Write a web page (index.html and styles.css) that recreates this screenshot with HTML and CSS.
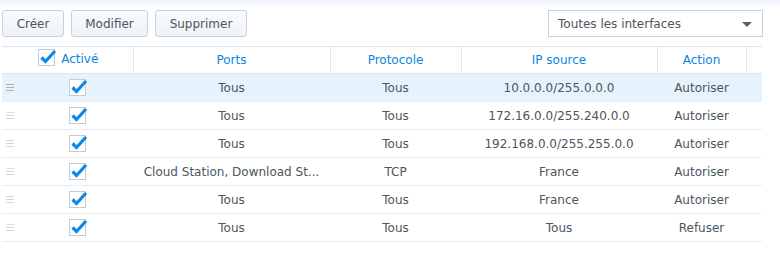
FILE: index.html
```html
<!DOCTYPE html>
<html lang="fr">
<head>
  <meta charset="UTF-8">
  <title>Pare-feu</title>
  <link rel="stylesheet" href="styles.css">
</head>
<body>
  <div class="panel">
    <!-- Toolbar -->
    <div class="toolbar">
      <div class="buttons">
        <button class="btn btn-create">Créer</button>
        <button class="btn btn-edit">Modifier</button>
        <button class="btn btn-delete">Supprimer</button>
      </div>
      <div class="select">
        <span>Toutes les interfaces</span>
        <span class="arrow"></span>
      </div>
    </div>

    <!-- Rules grid -->
    <table class="rules">
      <colgroup>
        <col class="c-drag">
        <col class="c-active">
        <col class="c-ports">
        <col class="c-proto">
        <col class="c-ip">
        <col class="c-action">
        <col class="c-pad">
      </colgroup>
      <thead>
        <tr>
          <th colspan="2">
            <span class="head-check">
              <svg class="check" width="20" height="18" viewBox="0 0 20 18"><rect x="0.5" y="1.5" width="16" height="16" fill="#fff" stroke="#c3ccd6"/><path d="M3.5 9.5 L7.5 13.5 L17 3" fill="none" stroke="#0a8ae8" stroke-width="3.2"/></svg>
              Activé
            </span>
          </th>
          <th>Ports</th>
          <th>Protocole</th>
          <th>IP source</th>
          <th>Action</th>
          <th></th>
        </tr>
      </thead>
      <tbody>
        <tr class="selected">
          <td class="drag"><span class="grip"></span></td>
          <td><svg class="check" width="20" height="18" viewBox="0 0 20 18"><rect x="0.5" y="1.5" width="16" height="16" fill="#fff" stroke="#c3ccd6"/><path d="M3.5 9.5 L7.5 13.5 L17 3" fill="none" stroke="#0a8ae8" stroke-width="3.2"/></svg></td>
          <td>Tous</td>
          <td>Tous</td>
          <td>10.0.0.0/255.0.0.0</td>
          <td>Autoriser</td>
          <td></td>
        </tr>
        <tr>
          <td class="drag"><span class="grip"></span></td>
          <td><svg class="check" width="20" height="18" viewBox="0 0 20 18"><rect x="0.5" y="1.5" width="16" height="16" fill="#fff" stroke="#c3ccd6"/><path d="M3.5 9.5 L7.5 13.5 L17 3" fill="none" stroke="#0a8ae8" stroke-width="3.2"/></svg></td>
          <td>Tous</td>
          <td>Tous</td>
          <td>172.16.0.0/255.240.0.0</td>
          <td>Autoriser</td>
          <td></td>
        </tr>
        <tr>
          <td class="drag"><span class="grip"></span></td>
          <td><svg class="check" width="20" height="18" viewBox="0 0 20 18"><rect x="0.5" y="1.5" width="16" height="16" fill="#fff" stroke="#c3ccd6"/><path d="M3.5 9.5 L7.5 13.5 L17 3" fill="none" stroke="#0a8ae8" stroke-width="3.2"/></svg></td>
          <td>Tous</td>
          <td>Tous</td>
          <td>192.168.0.0/255.255.0.0</td>
          <td>Autoriser</td>
          <td></td>
        </tr>
        <tr>
          <td class="drag"><span class="grip"></span></td>
          <td><svg class="check" width="20" height="18" viewBox="0 0 20 18"><rect x="0.5" y="1.5" width="16" height="16" fill="#fff" stroke="#c3ccd6"/><path d="M3.5 9.5 L7.5 13.5 L17 3" fill="none" stroke="#0a8ae8" stroke-width="3.2"/></svg></td>
          <td>Cloud Station, Download St...</td>
          <td>TCP</td>
          <td>France</td>
          <td>Autoriser</td>
          <td></td>
        </tr>
        <tr>
          <td class="drag"><span class="grip"></span></td>
          <td><svg class="check" width="20" height="18" viewBox="0 0 20 18"><rect x="0.5" y="1.5" width="16" height="16" fill="#fff" stroke="#c3ccd6"/><path d="M3.5 9.5 L7.5 13.5 L17 3" fill="none" stroke="#0a8ae8" stroke-width="3.2"/></svg></td>
          <td>Tous</td>
          <td>Tous</td>
          <td>France</td>
          <td>Autoriser</td>
          <td></td>
        </tr>
        <tr>
          <td class="drag"><span class="grip"></span></td>
          <td><svg class="check" width="20" height="18" viewBox="0 0 20 18"><rect x="0.5" y="1.5" width="16" height="16" fill="#fff" stroke="#c3ccd6"/><path d="M3.5 9.5 L7.5 13.5 L17 3" fill="none" stroke="#0a8ae8" stroke-width="3.2"/></svg></td>
          <td>Tous</td>
          <td>Tous</td>
          <td>Tous</td>
          <td>Refuser</td>
          <td></td>
        </tr>
      </tbody>
    </table>
  </div>
</body>
</html>
```

FILE: styles.css
```css
body {
  margin: 0;
  font-family: "DejaVu Sans", Verdana, sans-serif;
  font-size: 12px;
  color: #4d5560;
  background: linear-gradient(#edf4fb 0, #ffffff 9px);
  width: 780px;
  height: 256px;
  overflow: hidden;
}
.panel {
  padding: 10px 0 0 2px;
  width: 760px;
}
.toolbar {
  display: flex;
  justify-content: space-between;
  height: 27px;
  margin-bottom: 9px;
}
.buttons {
  display: flex;
  gap: 7px;
}
.btn {
  height: 27px;
  padding: 0 13px;
  font-family: inherit;
  font-size: 12px;
  color: #4d5560;
  background: linear-gradient(#f9fbfd, #eef3f8);
  border: 1px solid #c6d0dc;
  border-radius: 3px;
}
.btn-create {
  width: 62px;
}
.btn-edit {
  width: 77px;
}
.btn-delete {
  width: 92px;
}
.select {
  width: 215px;
  height: 27px;
  box-sizing: border-box;
  border: 1px solid #c6d0dc;
  display: flex;
  align-items: center;
  justify-content: space-between;
  padding: 0 10px 0 9px;
  color: #4d5560;
  margin-right: -1px;
}
.arrow {
  width: 0;
  height: 0;
  border-left: 5px solid transparent;
  border-right: 5px solid transparent;
  border-top: 5px solid #5a636d;
  margin-top: 2px;
}
.rules {
  border-collapse: collapse;
  table-layout: fixed;
  width: 760px;
}
.c-drag { width: 18px; }
.c-active { width: 113px; }
.c-ports { width: 197px; }
.c-proto { width: 131px; }
.c-ip { width: 196px; }
.c-action { width: 89px; }
.c-pad { width: 16px; }
.rules th {
  height: 26px;
  padding: 0;
  font-weight: normal;
  color: #0a86e0;
  border-top: 1px solid #dde4ec;
  border-bottom: 1px solid #dde4ec;
  border-left: 1px solid #e3e9ef;
}
.rules th:first-child {
  border-left: none;
}
.head-check {
  display: inline-flex;
  align-items: center;
  gap: 3px;
  margin-left: 2px;
}
.rules td {
  height: 27px;
  padding: 0;
  text-align: center;
  border-bottom: 1px solid #e8ecf0;
  white-space: nowrap;
}
.rules svg.check {
  display: block;
  margin: 0 auto;
  position: relative;
  left: 2px;
  top: -1px;
}
.head-check svg.check {
  left: 0;
  top: -2px;
  margin: 0;
}
.rules td.drag {
  text-align: left;
  padding-left: 4px;
}
.grip {
  display: block;
  width: 8px;
  height: 7px;
  border-top: 1px solid #d3d8dd;
  border-bottom: 1px solid #d3d8dd;
  position: relative;
  box-sizing: border-box;
}
.grip::after {
  content: "";
  position: absolute;
  left: 0;
  right: 0;
  top: 2px;
  border-top: 1px solid #d3d8dd;
}
.selected td {
  background: #e6f3fd;
}
.selected .grip,
.selected .grip::after {
  border-color: #a9b2bb;
}
```
